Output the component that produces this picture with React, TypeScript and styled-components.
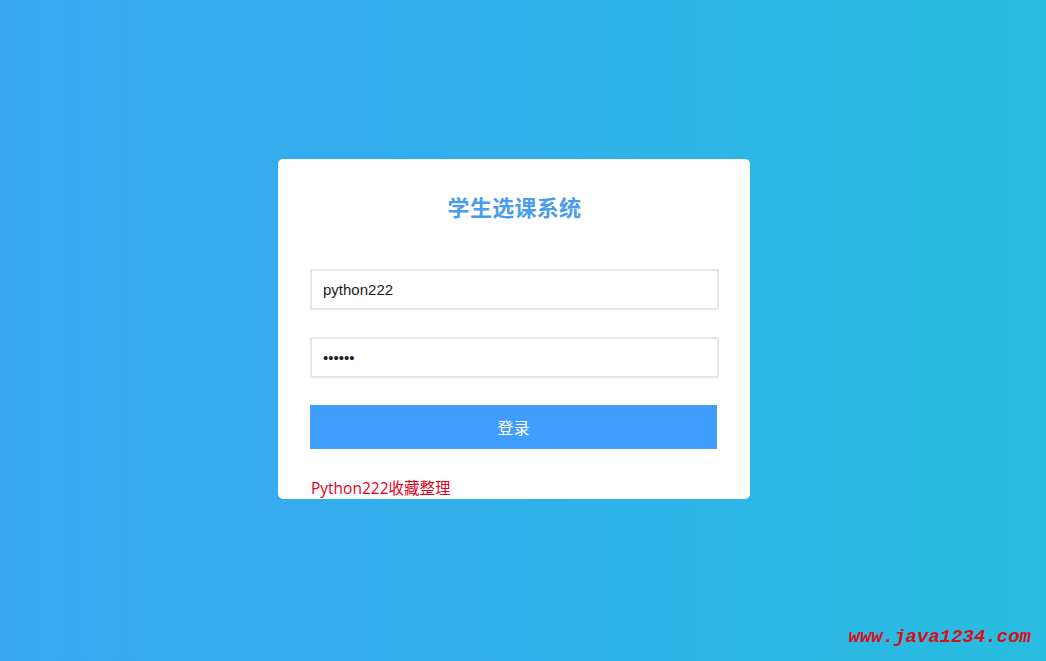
import React from "react";
import styled, { createGlobalStyle } from "styled-components";

const GlobalStyle = createGlobalStyle`
  html, body {
    margin: 0;
    padding: 0;
    height: 100%;
  }
  body {
    font-family: "Liberation Sans", "Noto Sans CJK SC", sans-serif;
  }
`;

const Page = styled.div`
  position: relative;
  width: 100%;
  height: 661px;
  background: linear-gradient(90deg, #3aa6f3 0%, #27bde0 100%);
  display: flex;
  align-items: center;
  justify-content: center;
  padding: 0 18px 4px 0;
  box-sizing: border-box;
  overflow: hidden;
`;

const Card = styled.div`
  width: 472px;
  height: 340px;
  box-sizing: border-box;
  background: #ffffff;
  border-radius: 5px;
  padding: 33px 31px 0 32px;
  display: flex;
  flex-direction: column;
`;

const Title = styled.h1`
  margin: 0 0 49px;
  font-family: "Noto Sans CJK SC", sans-serif;
  font-size: 22px;
  line-height: 28px;
  font-weight: 700;
  color: #4a9cef;
  text-align: center;
  letter-spacing: 0.3px;
`;

const Field = styled.input`
  display: block;
  width: 409px;
  height: 41px;
  box-sizing: border-box;
  margin: 0 0 27px;
  padding: 0 11px;
  border: 2px solid #e6e6e6;
  border-radius: 0;
  outline: none;
  background: #fff;
  font-family: "Liberation Sans", Arial, sans-serif;
  font-size: 15px;
  color: #222;
`;

const LoginButton = styled.button`
  width: 407px;
  height: 44px;
  margin: 0;
  border: none;
  background: #409eff;
  color: #ffffff;
  font-family: "Noto Sans CJK SC", sans-serif;
  font-size: 16px;
  cursor: pointer;
`;

const Note = styled.div`
  margin-top: 29px;
  font-family: "Open Sans", "Noto Sans CJK SC", sans-serif;
  font-size: 15.5px;
  line-height: 20px;
  color: #e2001b;
  padding-left: 1px;
`;

const Watermark = styled.div`
  position: absolute;
  right: 15px;
  bottom: 13px;
  font-family: "Liberation Mono", "Courier New", monospace;
  font-style: italic;
  font-weight: 700;
  font-size: 19px;
  line-height: 22px;
  color: #d7101a;
`;

const App = () => {
  return (
    <>
      <GlobalStyle />
      <Page>
        <Card>
          <Title>学生选课系统</Title>
          <Field type="text" defaultValue="python222" />
          <Field type="password" defaultValue="123456" />
          <LoginButton>登录</LoginButton>
          <Note>Python222收藏整理</Note>
        </Card>
        <Watermark>www.java1234.com</Watermark>
      </Page>
    </>
  );
};

export default App;
